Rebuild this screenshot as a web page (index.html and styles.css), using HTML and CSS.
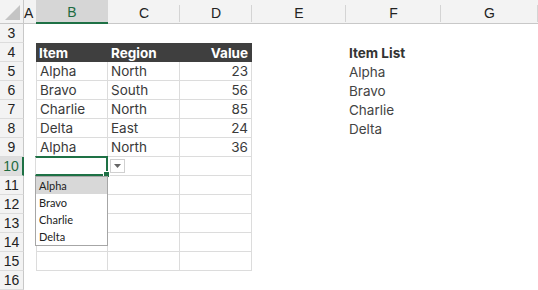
FILE: index.html
```html
<!DOCTYPE html>
<html>
<head>
<meta charset="utf-8">
<link rel="stylesheet" href="styles.css">
</head>
<body>
<div class="sheet">
  <div class="corner"><div class="tri"></div></div>
  <div class="colh">A</div>
  <div class="colh sel">B</div>
  <div class="colh">C</div>
  <div class="colh">D</div>
  <div class="colh">E</div>
  <div class="colh">F</div>
  <div class="colh last">G</div>

  <div class="rowh">3</div><div class="c"></div><div class="c"></div><div class="c"></div><div class="c"></div><div class="c"></div><div class="c"></div><div class="c"></div>

  <div class="rowh">4</div><div class="c"></div><div class="c th">Item</div><div class="c th">Region</div><div class="c th num">Value</div><div class="c"></div><div class="c list b">Item List</div><div class="c"></div>

  <div class="rowh">5</div><div class="c"></div><div class="c td">Alpha</div><div class="c td">North</div><div class="c td num">23</div><div class="c"></div><div class="c list">Alpha</div><div class="c"></div>
  <div class="rowh">6</div><div class="c"></div><div class="c td">Bravo</div><div class="c td">South</div><div class="c td num">56</div><div class="c"></div><div class="c list">Bravo</div><div class="c"></div>
  <div class="rowh">7</div><div class="c"></div><div class="c td">Charlie</div><div class="c td">North</div><div class="c td num">85</div><div class="c"></div><div class="c list">Charlie</div><div class="c"></div>
  <div class="rowh">8</div><div class="c"></div><div class="c td">Delta</div><div class="c td">East</div><div class="c td num">24</div><div class="c"></div><div class="c list">Delta</div><div class="c"></div>
  <div class="rowh">9</div><div class="c"></div><div class="c td">Alpha</div><div class="c td">North</div><div class="c td num">36</div><div class="c"></div><div class="c"></div><div class="c"></div>

  <div class="rowh rsel">10</div><div class="c"></div>
  <div class="c td active">
    <span class="handle"></span>
    <span class="ddbtn"><svg width="7" height="4" viewBox="0 0 7 4"><path d="M0 0h7L3.5 4z" fill="#666"/></svg></span>
    <div class="ddlist">
      <div class="ddi hi">Alpha</div>
      <div class="ddi">Bravo</div>
      <div class="ddi">Charlie</div>
      <div class="ddi">Delta</div>
    </div>
  </div>
  <div class="c td"></div><div class="c td"></div><div class="c"></div><div class="c"></div><div class="c"></div>

  <div class="rowh">11</div><div class="c"></div><div class="c td"></div><div class="c td"></div><div class="c td"></div><div class="c"></div><div class="c"></div><div class="c"></div>
  <div class="rowh">12</div><div class="c"></div><div class="c td"></div><div class="c td"></div><div class="c td"></div><div class="c"></div><div class="c"></div><div class="c"></div>
  <div class="rowh">13</div><div class="c"></div><div class="c td"></div><div class="c td"></div><div class="c td"></div><div class="c"></div><div class="c"></div><div class="c"></div>
  <div class="rowh">14</div><div class="c"></div><div class="c td"></div><div class="c td"></div><div class="c td"></div><div class="c"></div><div class="c"></div><div class="c"></div>
  <div class="rowh">15</div><div class="c"></div><div class="c td"></div><div class="c td"></div><div class="c td"></div><div class="c"></div><div class="c"></div><div class="c"></div>
  <div class="rowh">16</div><div class="c"></div><div class="c"></div><div class="c"></div><div class="c"></div><div class="c"></div><div class="c"></div><div class="c"></div>
</div>
</body>
</html>
```
FILE: styles.css
```css
html, body { margin: 0; padding: 0; background: #fff; }
body { width: 538px; height: 290px; overflow: hidden; }
.sheet {
  display: grid;
  grid-template-columns: 24px 12px 72px 72px 72px 94px 95px 97px;
  grid-template-rows: 24px repeat(14, 19px);
  font-family: Inter, "Noto Sans", sans-serif;
  font-size: 13.5px;
  color: #222;
}
.corner {
  background: #f3f3f3;
  border-bottom: 1px solid #c8c8c8;
  border-right: 1px solid #c8c8c8;
  box-sizing: border-box;
  position: relative;
}
.tri {
  position: absolute; right: 3px; bottom: 3px;
  width: 0; height: 0;
  border-left: 15px solid transparent;
  border-bottom: 15px solid #c4c4c4;
}
.colh {
  background: #f3f3f3;
  border-bottom: 1px solid #c8c8c8;
  box-sizing: border-box;
  display: flex; align-items: center; justify-content: center;
  font-family: "Liberation Sans", Arial, sans-serif;
  font-size: 14px;
  color: #222;
  position: relative;
  padding-top: 2px;
}
.colh::after {
  content: ""; position: absolute; right: 0; top: 5px; bottom: 1px;
  width: 1px; background: #d4d4d4;
}
.colh:nth-child(2) { justify-content: flex-start; padding-left: 0; }
.colh:nth-child(2)::after { display: none; }
.colh.sel {
  background: #d6d6d6;
  color: #1e6b41;
  border-bottom: 2px solid #1e7145;
}
.colh.sel::after { display: none; }
.rowh {
  background: #f3f3f3;
  border-right: 1px solid #c8c8c8;
  border-bottom: 1px solid #dcdcdc;
  box-sizing: border-box;
  display: flex; align-items: center; justify-content: center;
  font-family: "Liberation Sans", Arial, sans-serif;
  font-size: 14px;
  color: #222;
}
.rowh.rsel {
  background: #dedede;
  color: #1e6b41;
  border-right: 2px solid #1e7145;
}
.c {
  box-sizing: border-box;
  display: flex; align-items: center;
  padding: 0 3px 0 3px;
  white-space: nowrap;
  position: relative;
}
.th {
  background: #3f3f3f;
  color: #fff;
  font-weight: 700;
  border-right: 1px solid #3f3f3f;
}
.th.num, .td.num { justify-content: flex-end; }
.td {
  color: #3a3a3a;
  border-right: 1px solid #dcdcdc;
  border-bottom: 1px solid #dcdcdc;
}
.td:nth-child(8n+3) { border-left: 1px solid #dcdcdc; }
.list { color: #444; padding-left: 3px; }
.list.b { font-weight: 700; color: #333; }
.active {
  border: 2px solid #1e7145;
  margin-top: -1px;
  margin-left: -1px;
  width: calc(100% + 1px);
  height: calc(100% + 1px);
  overflow: visible;
  z-index: 2;
}
.handle {
  position: absolute; right: -4px; bottom: -4px;
  width: 5px; height: 5px; background: #1e7145;
  border: 1px solid #fff;
}
.ddbtn {
  position: absolute; left: 74px; top: 1px;
  width: 15px; height: 14px;
  background: #fff;
  border: 1px solid #d0d0d0;
  box-sizing: border-box;
  display: flex; align-items: center; justify-content: center;
}
.ddlist {
  position: absolute; left: -1px; top: 18px;
  width: 73px;
  background: #fff;
  border: 1px solid #a6a6a6;
  box-sizing: border-box;
  padding: 0;
  font-family: Lato, "Open Sans", sans-serif;
  font-size: 11px;
  color: #222;
  z-index: 3;
}
.ddi { height: 17px; line-height: 17px; padding-left: 3px; }
.ddi.hi { background: #d8d8d8; }
```
